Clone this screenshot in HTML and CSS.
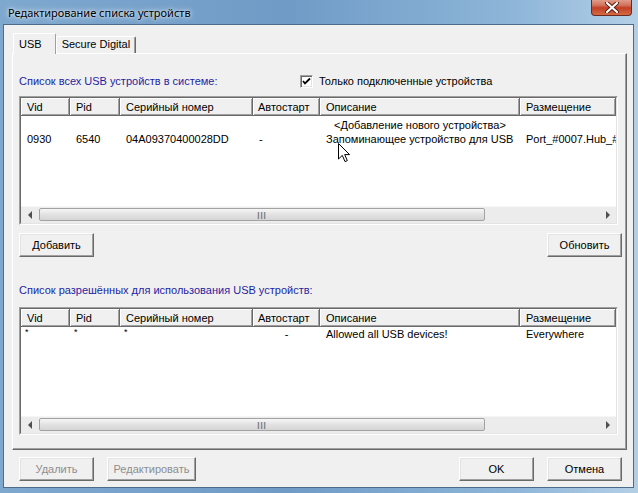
FILE: index.html
```html
<!DOCTYPE html>
<html lang="ru">
  <head>
    <meta charset="UTF-8" />
    <title>Редактирование списка устройств</title>
    <link rel="stylesheet" href="styles.css">
  </head>
  <body>
    <div class="window">
      <div class="titlebar">
        <span class="title">Редактирование списка устройств</span>
        <div class="closeBtn">
          <svg width="14" height="11" viewBox="0 0 14 11">
            <path d="M2 1 L12 10 M12 1 L2 10" stroke="#5a1a10" stroke-width="4" stroke-linecap="round"/>
            <path d="M2 1 L12 10 M12 1 L2 10" stroke="#fff" stroke-width="2.2" stroke-linecap="round"/>
          </svg>
        </div>
      </div>

      <div class="client">
        <div class="tabs">
          <div class="tab active">USB</div>
          <div class="tab">Secure Digital</div>
        </div>

        <div class="pane">
          <div class="labelRow">
            <span class="caption wide">Список всех USB устройств в системе:</span>
            <span class="check">
              <svg width="9" height="9" viewBox="0 0 9 9"><path d="M1 4 L3 6.5 L8 1.5" stroke="#000" stroke-width="1.8" fill="none"/></svg>
            </span>
            <span class="checkText">Только подключенные устройства</span>
          </div>

          <div class="list tall">
            <div class="listIn">
              <div class="lhead">
                <div class="hcell c1">Vid</div>
                <div class="hcell c2">Pid</div>
                <div class="hcell c3">Серийный номер</div>
                <div class="hcell c4 short">Автостарт</div>
                <div class="hcell c5">Описание</div>
                <div class="hcell c6">Размещение</div>
              </div>
              <div class="lbody">
                <div class="lrow double">
                  <div class="cell c1">0930</div>
                  <div class="cell c2">6540</div>
                  <div class="cell c3">04A09370400028DD</div>
                  <div class="cell c4 short">-</div>
                  <div class="cell c5 desc">
                    <div class="indent">&lt;Добавление нового устройства&gt;</div>
                    <div>Запоминающее устройство для USB</div>
                  </div>
                  <div class="cell c6 last">Port_#0007.Hub_#</div>
                </div>
                <svg class="cursor" width="13" height="20" viewBox="0 0 13 20">
                  <path d="M0.5 0.5 L0.5 16 L4.3 12.4 L7 18.6 L9.3 17.6 L6.7 11.6 L11.6 11.6 Z" fill="#fff" stroke="#000" stroke-width="1"/>
                </svg>
              </div>
              <div class="hscroll">
                <div class="arrow"><span class="triLeft"></span></div>
                <div class="track"><div class="thumb">|||</div></div>
                <div class="arrow"><span class="triRight"></span></div>
              </div>
            </div>
          </div>

          <div class="btnRow">
            <button class="btn">Добавить</button>
            <button class="btn">Обновить</button>
          </div>

          <div class="labelRow second">
            <span class="caption">Список разрешённых для использования USB устройств:</span>
          </div>

          <div class="list">
            <div class="listIn">
              <div class="lhead">
                <div class="hcell c1">Vid</div>
                <div class="hcell c2">Pid</div>
                <div class="hcell c3">Серийный номер</div>
                <div class="hcell c4 short">Автостарт</div>
                <div class="hcell c5">Описание</div>
                <div class="hcell c6">Размещение</div>
              </div>
              <div class="lbody">
                <div class="lrow">
                  <div class="cell c1 star">*</div>
                  <div class="cell c2 star">*</div>
                  <div class="cell c3 star">*</div>
                  <div class="cell c4 centre">-</div>
                  <div class="cell c5">Allowed all USB devices!</div>
                  <div class="cell c6">Everywhere</div>
                </div>
              </div>
              <div class="hscroll">
                <div class="arrow"><span class="triLeft"></span></div>
                <div class="track"><div class="thumb">|||</div></div>
                <div class="arrow"><span class="triRight"></span></div>
              </div>
            </div>
          </div>
        </div>

        <div class="footer">
          <button class="btn" disabled>Удалить</button>
          <button class="btn wideBtn" disabled>Редактировать</button>
          <span class="spacer"></span>
          <button class="btn">OK</button>
          <button class="btn">Отмена</button>
        </div>
      </div>
    </div>
  </body>
</html>
```

FILE: styles.css
```css
body {
  margin: 0;
  font-family: "Liberation Sans", Arial, sans-serif;
  font-size: 11px;
  color: #000;
}
.window {
  width: 638px;
  height: 493px;
  display: flex;
  flex-direction: column;
  background: linear-gradient(90deg, #7fa8cf 0%, #6f9bc6 45%, #8db5d8 80%, #b3cfe6 100%);
}
.titlebar {
  height: 24px;
  display: flex;
  align-items: center;
  padding-left: 8px;
  position: relative;
}
.title {
  font-family: "Noto Sans", sans-serif;
  font-size: 11px;
  text-shadow: 0 0 6px #e8f1fa, 0 0 3px #e8f1fa;
}
.closeBtn {
  position: absolute;
  right: 6px;
  top: -1px;
  width: 41px;
  height: 17px;
  border: 1px solid #6b2a1f;
  border-top: none;
  border-radius: 0 0 4px 4px;
  background: linear-gradient(#e3a593 0%, #d1715a 40%, #c23f24 55%, #d46a45 100%);
  display: flex;
  align-items: center;
  justify-content: center;
  box-sizing: border-box;
}
.client {
  flex: 1;
  margin: 0 4px 5px 3px;
  background: #f0f0f0;
  border: 1px solid #4d6c8c;
  display: flex;
  flex-direction: column;
}
.tabs {
  display: flex;
  align-items: flex-end;
  height: 20px;
  margin-top: 8px;
  padding-left: 9px;
  position: relative;
  z-index: 1;
}
.tab {
  height: 16px;
  line-height: 15px;
  padding: 0 5px;
  background: #f0f0f0;
  border: 1px solid;
  border-color: #fff #696969 transparent #fff;
  box-shadow: inset -1px 0 #a0a0a0;
  border-bottom: none;
  border-radius: 2px 2px 0 0;
}
.tab.active {
  height: 20px;
  line-height: 21px;
  padding: 0 13px 0 5px;
  margin-bottom: -1px;
  border-right-color: #a0a0a0;
  box-shadow: none;
}
.pane {
  margin-left: 8px;
  width: 615px;
  height: 397px;
  box-sizing: border-box;
  border: 1px solid;
  border-color: #fff #696969 #696969 #fff;
  box-shadow: inset -1px -1px #a0a0a0;
  padding-left: 6px;
}
.labelRow {
  display: flex;
  align-items: center;
  height: 14px;
  margin-top: 20px;
}
.labelRow.second {
  margin-top: 26px;
}
.caption {
  color: #1f1fa3;
}
.caption.wide {
  width: 281px;
}
.check {
  width: 13px;
  height: 13px;
  box-sizing: border-box;
  border: 1px solid;
  border-color: #a0a0a0 #fff #fff #a0a0a0;
  box-shadow: inset 1px 1px #696969, inset -1px -1px #e3e3e3;
  background: #fff;
  display: flex;
  align-items: center;
  justify-content: center;
}
.checkText {
  margin-left: 6px;
}
.list {
  width: 599px;
  height: 128px;
  margin-top: 10px;
  box-sizing: border-box;
  border: 1px solid;
  border-color: #a0a0a0 #fff #fff #a0a0a0;
}
.list.tall {
  height: 129px;
  margin-top: 8px;
}
.listIn {
  height: 100%;
  box-sizing: border-box;
  border: 1px solid;
  border-color: #696969 #e3e3e3 #e3e3e3 #696969;
  background: #fff;
  display: flex;
  flex-direction: column;
  overflow: hidden;
}
.lhead,
.lrow {
  display: flex;
  white-space: nowrap;
}
.hcell {
  height: 18px;
  line-height: 18px;
  box-sizing: border-box;
  padding-left: 6px;
  background: #f0f0f0;
  border-right: 1px solid #696969;
  border-bottom: 1px solid #696969;
  box-shadow: inset 1px 1px #fff, inset -1px -1px #a0a0a0;
  flex-shrink: 0;
  overflow: hidden;
}
.c1 { width: 49px; }
.c2 { width: 50px; }
.c3 { width: 133px; }
.c4 { width: 67px; }
.c5 { width: 200px; }
.c6 { width: 96px; }
.last { width: 100px; }
.short { padding-left: 5px; }
.lbody {
  flex: 1;
  position: relative;
}
.cell {
  box-sizing: border-box;
  padding-left: 6px;
  line-height: 14px;
  flex-shrink: 0;
  overflow: hidden;
}
.lrow.double .cell {
  padding-top: 16px;
}
.lrow.double .cell.desc {
  padding-top: 2px;
}
.indent {
  padding-left: 8px;
}
.star {
  padding-left: 4px;
  font-size: 9px;
  line-height: 11px;
}
.centre {
  text-align: center;
  padding-left: 0;
}
.cursor {
  position: absolute;
  left: 317px;
  top: 27px;
}
.hscroll {
  height: 16px;
  display: flex;
  background: #ececec;
  border-top: 1px solid #f6f6f6;
}
.arrow {
  width: 17px;
  display: flex;
  align-items: center;
  justify-content: center;
}
.triLeft,
.triRight {
  width: 0;
  height: 0;
  border-top: 4px solid transparent;
  border-bottom: 4px solid transparent;
}
.triLeft { border-right: 4px solid #505050; }
.triRight { border-left: 4px solid #505050; }
.track {
  flex: 1;
  padding: 1px 0;
}
.thumb {
  width: 446px;
  height: 13px;
  margin-left: 1px;
  box-sizing: border-box;
  border: 1px solid #a3a3a3;
  border-radius: 2px;
  background: linear-gradient(#f6f6f6, #e2e2e2 50%, #d5d5d5);
  font-size: 8px;
  line-height: 11px;
  letter-spacing: 1px;
  color: #707070;
  text-align: center;
  font-weight: bold;
}
.btnRow {
  width: 603px;
  display: flex;
  justify-content: space-between;
  margin-top: 8px;
}
.btn {
  width: 75px;
  height: 24px;
  padding: 0;
  font-family: "Liberation Sans", Arial, sans-serif;
  font-size: 11px;
  color: #000;
  background: #f0f0f0;
  border: 1px solid;
  border-color: #fff #696969 #696969 #fff;
  box-shadow: inset -1px -1px #a0a0a0, inset 1px 1px #e3e3e3;
  border-radius: 0;
}
.btn:disabled {
  color: #8e8e8e;
}
.wideBtn {
  width: 89px;
}
.footer {
  display: flex;
  gap: 13px;
  margin: 7px 11px 0 15px;
}
.spacer {
  flex: 1;
}
```
